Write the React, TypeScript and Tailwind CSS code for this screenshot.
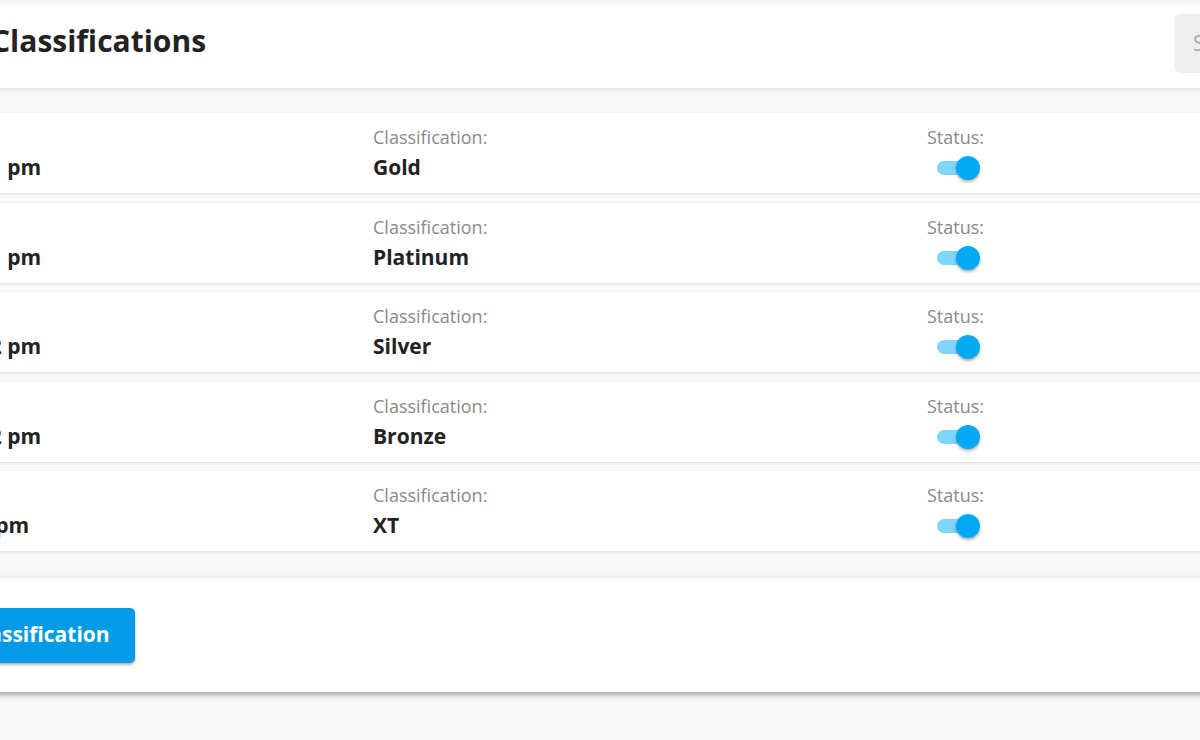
type Row = { date: string; classification: string; enabled: boolean };

const rows: Row[] = [
  { date: "Jan 12, 2021 12:41 pm", classification: "Gold", enabled: true },
  { date: "Jan 12, 2021 12:41 pm", classification: "Platinum", enabled: true },
  { date: "Jan 12, 2021 12:42 pm", classification: "Silver", enabled: true },
  { date: "Jan 12, 2021 12:42 pm", classification: "Bronze", enabled: true },
  { date: "Jan 12, 2021 3:41 pm", classification: "XT", enabled: true },
];

function Toggle({ on }: { on: boolean }) {
  return (
    <div className="relative ml-[10px] mt-[5px] h-[26px] w-[44px]">
      <div className={`absolute left-0 top-[5px] h-[14px] w-[38px] rounded-full ${on ? "bg-[#81d4fa]" : "bg-gray-300"}`} />
      <div
        className={`absolute top-0 h-[24px] w-[24px] rounded-full shadow-[0_2px_3px_rgba(0,0,0,0.3)] ${
          on ? "left-[19px] bg-[#03a9f4]" : "left-0 bg-white"
        }`}
      />
    </div>
  );
}

export default function App() {
  return (
    <div className="relative h-[740px] w-[1200px] overflow-hidden bg-[#f9f9f9] font-['Open_Sans',sans-serif] text-[#222]">
      <div className="ml-[-200px] w-[1700px]">
        <header className="flex h-[88px] items-center justify-between bg-white pl-[191px] pr-[25px] shadow-[0_2px_6px_rgba(0,0,0,0.1),inset_0_8px_8px_-6px_rgba(0,0,0,0.08)]">
          <h1 className="mb-[8px] text-[30px] font-bold">Classifications</h1>
          <div className="mb-[1px] flex h-[59px] w-[300px] items-center rounded-[5px] bg-[#eeeeee] pl-[18px] text-[21px] text-[#aaaaaa]">
            Search
          </div>
        </header>

        <div className="mt-[25px] flex flex-col gap-[9.5px]">
          {rows.map((row) => (
            <div
              key={row.classification}
              className="grid h-[80px] grid-cols-[553px_554px_1fr] bg-white pl-[20px] pt-[11px] shadow-[0_1px_3px_rgba(0,0,0,0.12)]"
            >
              <div>
                <div className="text-[18px] text-[#8a8a8a]">Date Added:</div>
                <div className="mt-[1px] text-[21px] font-bold">{row.date}</div>
              </div>
              <div>
                <div className="text-[18px] text-[#8a8a8a]">Classification:</div>
                <div className="mt-[1px] text-[21px] font-bold">{row.classification}</div>
              </div>
              <div>
                <div className="text-[18px] text-[#8a8a8a]">Status:</div>
                <Toggle on={row.enabled} />
              </div>
            </div>
          ))}
        </div>

        <div className="mt-[27px] flex h-[114px] items-center bg-white pl-[98px] shadow-[0_3px_5px_rgba(0,0,0,0.3),0_0_10px_rgba(0,0,0,0.08)]">
          <button className="h-[55px] rounded-[5px] bg-[#039be5] px-[25px] text-[21px] font-bold text-white shadow-[0_2px_3px_rgba(0,0,0,0.3)]">
            Add Classification
          </button>
        </div>
      </div>
    </div>
  );
}
